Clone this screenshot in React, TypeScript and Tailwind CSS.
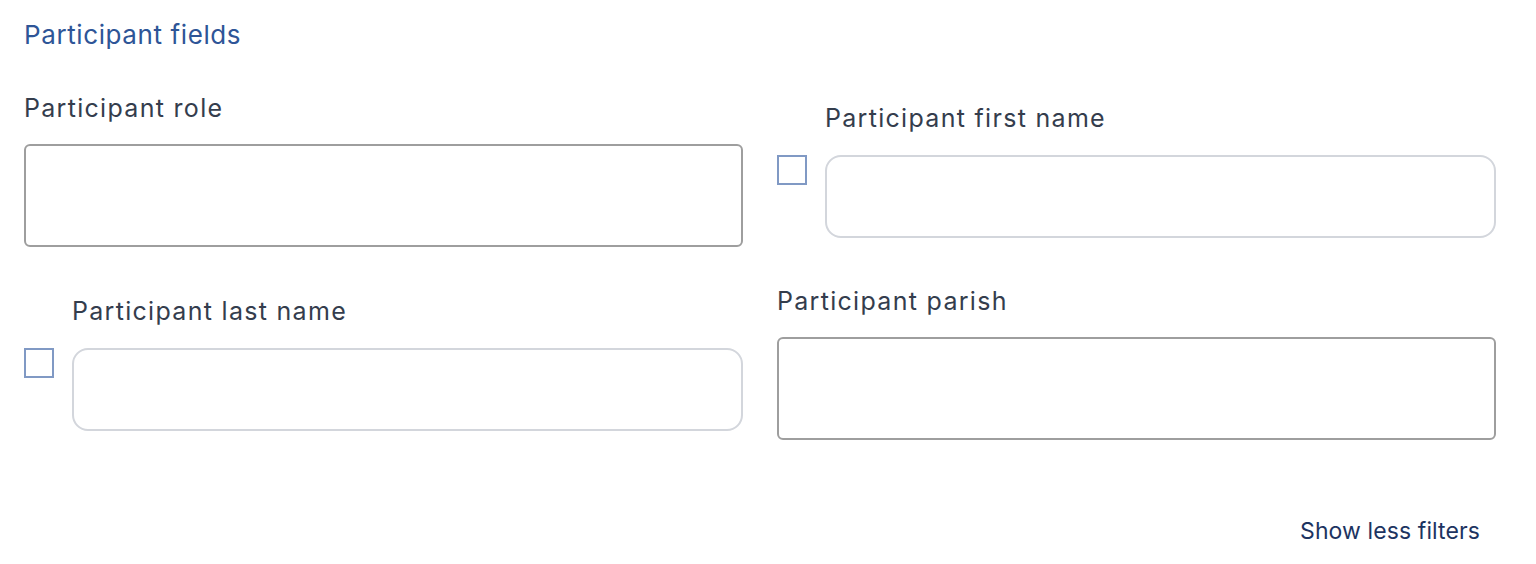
import React from 'react';

const font = { fontFamily: 'Inter, "Noto Sans", sans-serif' };

function Checkbox() {
  return <span className="block w-[30px] h-[30px] shrink-0 border-2 border-[#8099c4] bg-white" />;
}

const labelCls = 'block text-[25px] leading-8 tracking-[1.3px] text-[#343d4d]';

export default function App() {
  return (
    <div className="w-[1536px] h-[564px] bg-white pl-6 pr-10 pt-[19px]" style={font}>
      <h2 className="text-[26px] leading-8 tracking-[0.6px] text-[#2e5597]">Participant fields</h2>

      <div className="mt-[41px] grid grid-cols-2 gap-x-[34px] gap-y-[38px] items-center">
        {/* Participant role */}
        <div>
          <label className={labelCls}>Participant role</label>
          <div className="mt-5 h-[103px] rounded-md border-2 border-[#9e9e9e]" />
        </div>

        {/* Participant first name */}
        <div className="flex gap-[18px]">
          <div className="pt-[53px]">
            <Checkbox />
          </div>
          <div className="flex-1">
            <label className={labelCls}>Participant first name</label>
            <div className="mt-[21px] h-[83px] rounded-2xl border-2 border-[#d3d6dc]" />
          </div>
        </div>

        {/* Participant last name */}
        <div className="flex gap-[18px]">
          <div className="pt-[53px]">
            <Checkbox />
          </div>
          <div className="flex-1">
            <label className={labelCls}>Participant last name</label>
            <div className="mt-[21px] h-[83px] rounded-2xl border-2 border-[#d3d6dc]" />
          </div>
        </div>

        {/* Participant parish */}
        <div>
          <label className={labelCls}>Participant parish</label>
          <div className="mt-5 h-[103px] rounded-md border-2 border-[#9e9e9e]" />
        </div>
      </div>

      <div className="mt-[75px] flex justify-end pr-4">
        <button className="text-[23px] leading-8 tracking-[0.1px] text-[#1d3461]">Show less filters</button>
      </div>
    </div>
  );
}
